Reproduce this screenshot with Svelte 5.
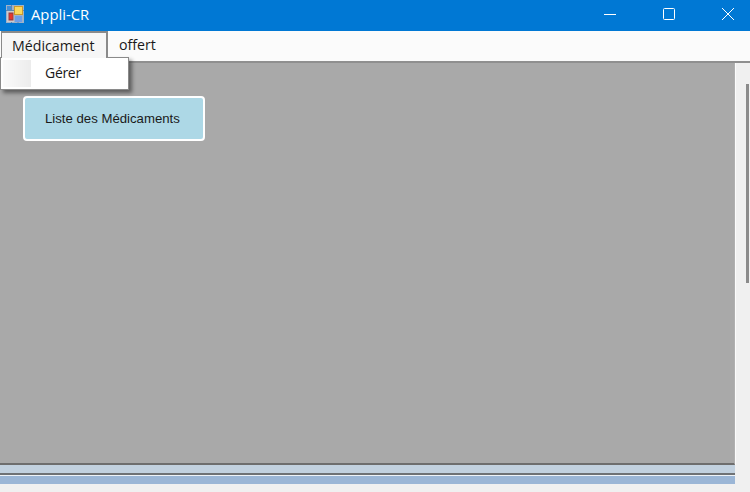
<script>
  let title = 'Appli-CR';
</script>

<div class="win">
  <header class="titlebar">
    <svg class="appicon" width="18" height="18" viewBox="0 0 18 18">
      <rect x="0" y="0" width="18" height="18" fill="#9fb2c8"/>
      <path d="M5.500 0v18M0 5.500h18M12 12v6" stroke="#5f86b0" fill="none"/>
      <rect x="1" y="1" width="4" height="4" fill="#3f8fd8"/>
      <rect x="1" y="6" width="7" height="11" fill="#c9ccd0"/>
      <rect x="2.500" y="7.500" width="5" height="8" fill="#a63a3a"/>
      <rect x="3.500" y="9" width="3" height="5" fill="#e8352c"/>
      <rect x="8" y="1" width="9" height="9" fill="#c99a2e"/>
      <rect x="9" y="2" width="7" height="7" fill="#fbd75c"/>
      <rect x="9" y="11" width="7" height="6" fill="#6f9fe8"/>
    </svg>
    <span class="title">{title}</span>
    <div class="controls">
      <svg width="14" height="14" viewBox="0 0 14 14"><path d="M1 7.500h12" stroke="#fff" fill="none"/></svg>
      <svg width="14" height="14" viewBox="0 0 14 14"><rect x="1.500" y="1.500" width="11" height="11" rx="1" stroke="#fff" fill="none"/></svg>
      <svg width="14" height="14" viewBox="0 0 14 14"><path d="M1 1l12 12M13 1L1 13" stroke="#fff" fill="none"/></svg>
    </div>
  </header>

  <nav class="menubar">
    <div class="menuitem open">Médicament</div>
    <div class="menuitem">offert</div>
    <div class="dropdown">
      <div class="gutter"></div>
      <div class="entry">Gérer</div>
    </div>
  </nav>

  <div class="body">
    <main class="content">
      <button class="card">Liste des Médicaments</button>
    </main>
    <aside class="scroll"><div class="thumb"></div></aside>
  </div>

  <footer class="bottom">
    <div class="strip light"></div>
    <div class="strip blue"></div>
  </footer>
</div>

<style>
  :global(body) { margin: 0; background: #f0f0f0; }
  .win {
    width: 750px; height: 492px; overflow: hidden;
    display: flex; flex-direction: column;
    font-family: "Open Sans", "Noto Sans", "Liberation Sans", sans-serif;
    background: #f0f0f0;
  }
  .titlebar {
    height: 31px; flex: none; background: #0078d4; color: #fff;
    display: flex; align-items: center; box-sizing: border-box;
    padding-left: 6px; padding-bottom: 7px; padding-top: 3px;
  }
  .appicon { flex: none; }
  .title { margin-left: 7px; font-size: 14.800px; line-height: 18px; }
  .controls {
    margin-left: auto; display: flex; gap: 45px; padding-right: 15px; align-items: center;
  }
  .controls svg { display: block; }
  .menubar {
    position: relative; z-index: 2; height: 32px; flex: none; box-sizing: border-box;
    background: #fbfbfb; display: flex; align-items: stretch;
    border-bottom: 2px solid #8f8f8f; padding-left: 1px;
    font-size: 14.200px; color: #1a1a1a;
  }
  .menuitem { padding: 0 11px 2px 11px; display: flex; align-items: center; line-height: 1; }
  .menuitem.open {
    height: 27px; box-sizing: border-box; background: #f6f6f6; color: #1a1a1a;
    border: 2px solid #8a8a8a; border-bottom: none; border-left-width: 1px;
    padding: 1px 11px 0 10px; position: relative; z-index: 2; width: 107px;
  }
  .dropdown {
    position: absolute; left: 0; top: 26px; width: 129px; height: 33px; box-sizing: border-box;
    background: #fff; border: 1px solid #8a8a8a;
    box-shadow: 3px 3px 4px rgba(0,0,0,.45);
    display: flex; align-items: stretch; padding: 2px; z-index: 1;
  }
  .gutter { width: 28px; background: linear-gradient(90deg, #fafafa, #ececec); flex: none; }
  .entry { margin-left: 14px; display: flex; align-items: center; font-size: 14px; letter-spacing: -0.300px; line-height: 1; padding-bottom: 2px; }
  .body { flex: 1; min-height: 0; display: flex; }
  .content {
    flex: 1; background: #a9a9a9; box-sizing: border-box;
    padding: 33px 0 0 23px; border-bottom: 2px solid #6e6e6e; border-right: 1px solid #b0b0b0;
  }
  .card {
    display: block; width: 182px; height: 45px; box-sizing: border-box;
    background: #add8e6; border: 2px solid #fff; border-radius: 4px;
    font-family: "Liberation Sans", Arial, sans-serif; font-size: 13.200px; color: #1a1a1a; text-align: left;
    padding: 0 0 1px 20px;
  }
  .scroll { width: 15px; flex: none; background: #f0f0f0; border-left: 1px solid #fcfcfc; padding-top: 21px; box-sizing: border-box; }
  .thumb { width: 3px; height: 199px; background: #8b8b8b; margin-left: 10px; }
  .bottom { height: 27px; flex: none; box-sizing: border-box; }
  .strip { box-sizing: border-box; width: 735px; }
  .light { height: 10px; background: #c2d1df; border-bottom: 2px solid #6f7275; }
  .blue { height: 9px; background: #9bb6d6; border-top: 1px solid #eef3f8; }
</style>
